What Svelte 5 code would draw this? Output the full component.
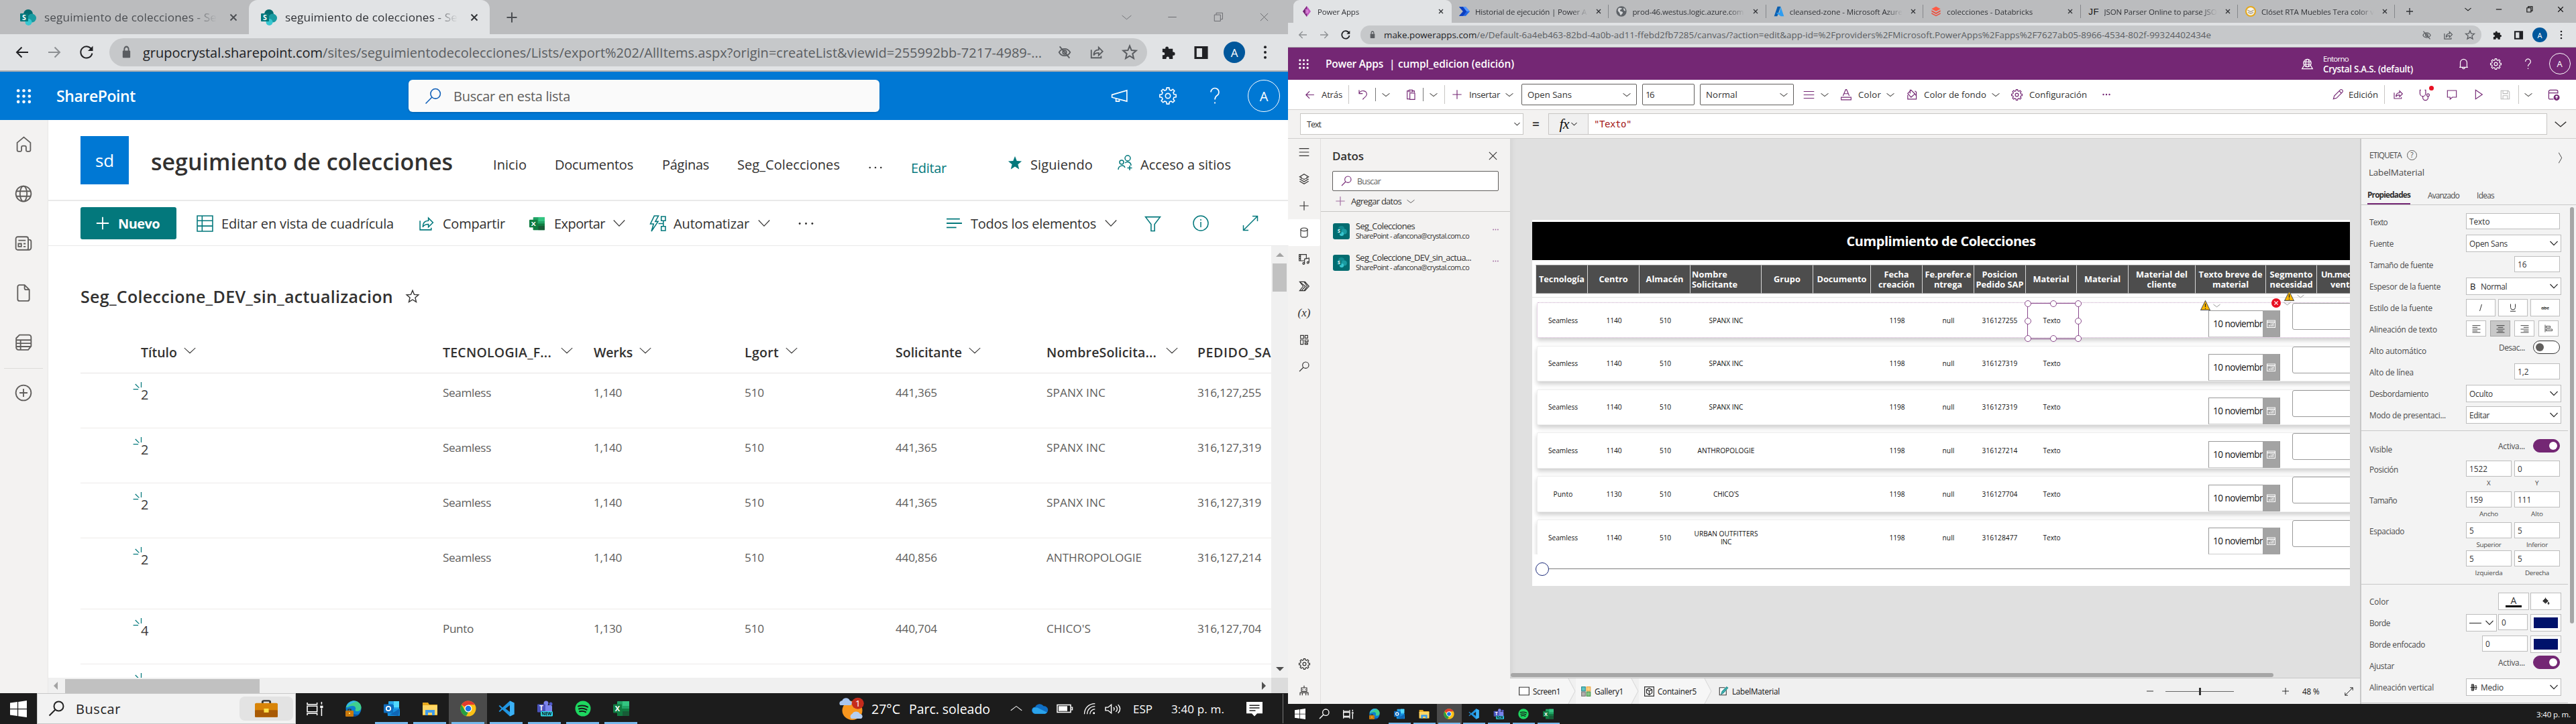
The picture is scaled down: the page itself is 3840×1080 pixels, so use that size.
<script>
  // Adjusts letter spacing so a label occupies its designed width.
  function fit(node, width) {
    if (!width) return;
    node.style.letterSpacing = '0px';
    const natural = node.getBoundingClientRect().width;
    const n = node.textContent.length || 1;
    node.style.letterSpacing = ((width - natural) / n).toFixed(3) + 'px';
  }

  function cog(teeth, outer, inner) {
    const pts = [];
    for (let i = 0; i < teeth; i++) {
      const a = (i / teeth) * Math.PI * 2;
      const s = Math.PI / teeth;
      for (const [r, d] of [[inner, -0.62], [outer, -0.36], [outer, 0.36], [inner, 0.62]]) {
        pts.push((12 + r * Math.cos(a + d * s)).toFixed(2) + ' ' + (12 + r * Math.sin(a + d * s)).toFixed(2));
      }
    }
    return `<path d="M${pts.join('L')}Z"/><circle cx="12" cy="12" r="3.4"/>`;
  }

  const F = 'fill="currentColor" stroke="none"';
  const dots9 = [4, 12, 20].map((y) => [4, 12, 20].map((x) => `<circle cx="${x}" cy="${y}" r="2.2" ${F}/>`).join('')).join('');
  const gfont = 'font-family="Open Sans, sans-serif" font-weight="700" stroke="none"';

  const icons = {
    back: '<path d="M21 12H4M11.500 4.500L4 12l7.500 7.500"/>',
    fwd: '<path d="M3 12h17M12.500 4.500L20 12l-7.500 7.500"/>',
    reload: '<path d="M19.500 7.800A8.600 8.600 0 1 0 20.400 13.500"/><path d="M21.500 2.500v7.500h-7.500z" fill="currentColor" stroke="none"/>',
    lock: `<rect x="4" y="9" width="16" height="13" rx="1.500" ${F}/><path d="M7.500 10V6.500a4.500 4.500 0 0 1 9 0V10"/>`,
    eyeoff: '<path d="M3 12c4-7.500 14-7.500 18 0c-4 7.500-14 7.500-18 0z"/><circle cx="12" cy="12" r="3"/><path d="M4 2.500L20 21.500"/>',
    share: '<path d="M3 8v13h16v-3"/><path d="M7 17c0-6 3-9 8-9V4l6.500 6.500L15 17v-4c-4 0-6.500 1-8 4z"/>',
    star: '<path d="M12 2.500l2.700 6.600 7 .5-5.400 4.600 1.700 7L12 17.400 6 21.200l1.700-7L2.300 9.600l7-.5z"/>',
    starfill: `<path d="M12 1l3 7.800 8 .4-6.200 5.200 2 8L12 18l-6.800 4.400 2-8L1 9.200l8-.4z" ${F}/>`,
    puzzle: `<path d="M10 2.500a2.500 2.500 0 0 1 2.500 2.500v1H19v5h.8a2.700 2.700 0 0 1 0 5.400H19V22h-5.500v-1.500a2.300 2.300 0 0 0-4.600 0V22H3v-6h1.300a2.300 2.300 0 0 0 0-4.600H3V6h4.500V5A2.500 2.500 0 0 1 10 2.500z" ${F}/>`,
    panel: `<path d="M1.500 2h21v20h-21zM5 5.200v13.600h8.500V5.200z" fill-rule="evenodd" ${F}/>`,
    vdots: `<circle cx="12" cy="3.500" r="2.200" ${F}/><circle cx="12" cy="12" r="2.200" ${F}/><circle cx="12" cy="20.500" r="2.200" ${F}/>`,
    hdots: `<circle cx="3" cy="12" r="1.400" ${F}/><circle cx="12" cy="12" r="1.400" ${F}/><circle cx="21" cy="12" r="1.400" ${F}/>`,
    hdotsb: `<circle cx="3" cy="12" r="2.400" ${F}/><circle cx="12" cy="12" r="2.400" ${F}/><circle cx="21" cy="12" r="2.400" ${F}/>`,
    close: '<path d="M3 3l18 18M21 3L3 21"/>',
    plus: '<path d="M12 2v20M2 12h20"/>',
    chev: '<path d="M1 6l11 11.500L23 6"/>',
    chevR: '<path d="M6 1l12 11L6 23"/>',
    chevUp: '<path d="M1 17L12 6l11 11"/>',
    min: '<path d="M2 12h20"/>',
    restore: '<path d="M2 6.500h14.500v15H2zM6.500 6V2h15v15H17"/>',
    waffle: dots9,
    search: '<circle cx="15.500" cy="8.500" r="7"/><path d="M10.500 13.500L1.500 22.500"/>',
    mega: '<path d="M1.500 10.500L22 4.500v15L1.500 14zM7 16v3.500h4.500v-2"/>',
    gear: cog(8, 11.3, 8.6),
    help: '<path d="M6.500 7a5.500 5.500 0 1 1 8.500 4.500c-2 1.400-3 2.500-3 5.500M12 20.500v2"/>',
    home: '<path d="M2.500 9.500L12 1.500l9.500 8V20a2 2 0 0 1-2 2h-2.700a1.500 1.500 0 0 1-1.500-1.500V16a2 2 0 0 0-2-2h-2.600a2 2 0 0 0-2 2v4.500A1.500 1.500 0 0 1 7.200 22H4.500a2 2 0 0 1-2-2z"/>',
    globe: '<circle cx="12" cy="12" r="10.500"/><ellipse cx="12" cy="12" rx="4.800" ry="10.500"/><path d="M2.500 8.500h19M2.500 15.500h19"/>',
    news: '<path d="M4 3h12a2.500 2.500 0 0 1 2.500 2.500V19a2 2 0 0 1-2 2H4a2.500 2.500 0 0 1-2.500-2.500v-13A2.500 2.500 0 0 1 4 3zM18.500 7h1.500a2.500 2.500 0 0 1 2.500 2.500V18a3 3 0 0 1-3 3h-3M5 8h10M12 12.500h3M12 16.500h3M5 12.500h4v4H5z"/>',
    file: '<path d="M5.500 1h8L20 7.500V20.500a2.500 2.500 0 0 1-2.500 2.500h-11A2.500 2.500 0 0 1 4 20.500v-17A2.500 2.500 0 0 1 6.500 1zM13.500 1v4.500a2 2 0 0 0 2 2H20"/>',
    list: '<path d="M6.500 1.500h13a3 3 0 0 1 3 3V17l-4 5H5a3 3 0 0 1-3-3V6zM2 8.500h20.500M2 13h20.500M2 17.500h20M8 8.500V22"/>',
    circplus: '<circle cx="12" cy="12" r="10.500"/><path d="M12 6.500v11M6.500 12h11"/>',
    grid: '<path d="M1 1h22v22H1zM8 1v22M1 8h22M1 15.500h22M15.500 8v0"/>',
    excel: `<rect x="6" y="1" width="18" height="22" rx="1" fill="#21a366" stroke="none"/><rect x="14" y="1" width="10" height="7" fill="#33c481" stroke="none"/><rect x="6" y="12" width="18" height="11" fill="#107c41" stroke="none"/><rect x="14" y="16" width="10" height="7" fill="#185c37" stroke="none"/><rect x="0" y="5.500" width="13" height="13" rx="1" fill="#107c41" stroke="none"/><text x="6.500" y="16" text-anchor="middle" font-size="11" fill="#fff" ${gfont}>X</text>`,
    flow: '<path d="M7 1L1.500 12.500H6L3 23 12.500 9H8.500L13 1zM17 2h6v6h-6zM17 16h6v6h-6zM20 8v8M13 12h7"/>',
    viewlist2: '<path d="M1 5h19M1 12h22M1 19h14"/>',
    filter: '<path d="M1.500 2.500h21L14.500 13v9.500h-5V13z"/>',
    info: '<circle cx="12" cy="12" r="11"/><path d="M12 10v8M12 6v2"/>',
    expand: '<path d="M1.500 22.500l21-21M15 1.500h7.500V9M1.500 15v7.500H9"/>',
    people: '<circle cx="15" cy="5" r="4"/><circle cx="6" cy="11" r="3"/><path d="M1 22c0-6 8-8 10-3M11 12c4-3 9-1 9 4M18 16v7M14.500 19.500h7"/>',
    sp: `<circle cx="12" cy="7" r="7" fill="#036c70" stroke="none"/><circle cx="17.500" cy="13" r="6.500" fill="#1a9ba1" stroke="none"/><circle cx="12.500" cy="19" r="5" fill="#37c6d0" stroke="none"/><rect x="0" y="6" width="12" height="12" rx="1" fill="#03787c" stroke="none"/><text x="6" y="16" text-anchor="middle" font-size="10.500" fill="#fff" ${gfont}>S</text>`,
    sptile: `<rect width="24" height="24" rx="3" fill="#036c70" stroke="none"/><circle cx="12" cy="8.500" r="4.500" fill="#1a9ba1" stroke="none" opacity=".6"/><circle cx="16" cy="12.500" r="4" fill="#1a9ba1" stroke="none"/><circle cx="12.500" cy="16" r="3" fill="#37c6d0" stroke="none"/><rect x="5" y="8.500" width="7" height="7" fill="#03787c" stroke="none"/><text x="8.500" y="14.500" text-anchor="middle" font-size="6.500" fill="#fff" ${gfont}>S</text>`,
    spark: '<path d="M1 20h12M6 8l9 9M20 3v13"/>',
    win: `<path d="M0 3.400L10.500 2v9.500H0zM11.700 1.800L24 0v11.500H11.700zM0 12.700h10.500V22L0 20.600zM11.700 12.700H24V24l-12.300-1.800z" ${F}/>`,
    taskview: '<path d="M1 2v3h14V2M1 22v-3h14v3M1 7.500h14v9H1zM21.500 1v4M21.500 11v12"/><rect x="19.500" y="7" width="4" height="3.500" fill="currentColor" stroke="none"/>',
    edge: '<circle cx="12" cy="12" r="11.500" fill="#0c7fcf" stroke="none"/><path d="M1 10C3 3 8 .5 13 .5c6 0 10.500 4.500 10.500 9.500 0 4-3 6-6.500 6-2.500 0-3-1.500-2-3 1-2-1-5-4-5-5 0-8 3-10 2z" fill="#3fcf8e" stroke="none"/><path d="M1 10C3 3 8 .5 13 .5c3 0 5 1 5 1C12 2 6 6 1 10z" fill="#35b8e8" stroke="none"/><path d="M8 12c-1 5 3 9 9 9 2 0 4-1 5-2-2 3-6 5-10 5-5-1-7-7-4-12z" fill="#0a4fa0" stroke="none"/><rect x="0" y="15" width="12" height="9" rx="1" fill="#c9780c" stroke="none"/><path d="M4 15v-2h4v2" stroke="#4a2a00" stroke-width="1.200"/><rect x="5" y="18" width="2" height="2" fill="#ffe36b" stroke="none"/>',
    outlook: `<rect x="7" y="1" width="16" height="19" rx="1" fill="#28a8ea" stroke="none"/><rect x="15" y="1" width="8" height="9" fill="#50d9ff" stroke="none"/><rect x="7" y="7" width="8" height="7" fill="#0364b8" stroke="none"/><path d="M5 12l19 0v10a1 1 0 0 1-1 1H6z" fill="#1490df" stroke="none"/><path d="M24 12L9 21l13 2z" fill="#1066b5" stroke="none"/><rect x="0" y="5.500" width="14" height="13" rx="1" fill="#0f6cbd" stroke="none"/><circle cx="7" cy="12" r="3.200" stroke="#fff" stroke-width="1.800"/>`,
    folder: '<path d="M1 3h8l2 3h12v16H1z" fill="#e8a81c" stroke="none"/><rect x="1" y="7" width="22" height="14" rx="1" fill="#ffd766" stroke="none"/><path d="M5 22v-8h14v8h-4v-4H9v4z" fill="#3f9be8" stroke="none"/>',
    chrome: '<circle cx="12" cy="12" r="11.500" fill="#fbc116" stroke="none"/><path d="M12 12L2 6.200A11.500 11.500 0 0 1 22 6.300H12z" fill="#e33b2e" stroke="none"/><path d="M2 6.200l5 8.700L12 17.500 9 23.100A11.500 11.500 0 0 1 2 6.200z" fill="#269f42" stroke="none"/><circle cx="12" cy="12" r="5.500" fill="#fff" stroke="none"/><circle cx="12" cy="12" r="4.300" fill="#1a73e8" stroke="none"/>',
    vscode: '<path d="M17 .5l6.500 3v17l-6.500 3L6 13.500 2 17 .5 16 4.500 12 .5 8 2 7l4 3.500z" fill="#2196e3" stroke="none"/><path d="M17 7v10l-6.500-5z" fill="#1c1c1c" stroke="none"/><path d="M17 .5l6.500 3v17l-6.500 3z" fill="#3bb1f5" stroke="none"/>',
    teams: `<circle cx="14" cy="4" r="3.500" fill="#7b83eb" stroke="none"/><circle cx="21" cy="5" r="2.500" fill="#5059c9" stroke="none"/><rect x="8" y="7" width="15" height="12" rx="2" fill="#7b83eb" stroke="none"/><rect x="1" y="5.500" width="12" height="12" rx="1" fill="#4b53bc" stroke="none"/><text x="7" y="15" text-anchor="middle" font-size="10" fill="#fff" ${gfont}>T</text><rect x="6" y="16" width="18" height="7.500" rx="1.500" fill="#2fe0ee" stroke="none"/><text x="15" y="22.200" text-anchor="middle" font-size="6.500" fill="#111" ${gfont}>NEW</text>`,
    spotify: '<circle cx="12" cy="12" r="11.500" fill="#1ed760" stroke="none"/><path d="M5 8.500c5-1.500 10-1 14 1.200M6 12.500c4-1.200 8-.7 11.500 1.200M7 16.200c3.500-1 6.500-.5 9 1" stroke="#161616" stroke-width="2" stroke-linecap="round"/>',
    case: '<path d="M8 6V3.500A1.500 1.500 0 0 1 9.500 2h5A1.500 1.500 0 0 1 16 3.500V6" stroke="#333" stroke-width="2"/><rect x="0" y="5" width="24" height="18" rx="1.500" fill="#d88408" stroke="none"/><rect x="0" y="14" width="24" height="9" rx="1" fill="#a85a05" stroke="none"/><rect x="9.500" y="12" width="5" height="5" fill="#ffe14a" stroke="none"/>',
    weather: `<circle cx="13" cy="14" r="10" fill="#f8961e" stroke="none"/><path d="M1 8.500a3 3 0 0 1 2-5 4 4 0 0 1 7.500 0 2.800 2.800 0 0 1 1 5z" fill="#a9c5ee" stroke="none"/><path d="M12 22.500a3 3 0 0 1 1-5 4.200 4.200 0 0 1 7.500 0 2.800 2.800 0 0 1 1.500 5z" fill="#b5cef2" stroke="none"/><circle cx="18.500" cy="6.500" r="6" fill="#c42b1c" stroke="none"/><text x="18.500" y="10" text-anchor="middle" font-size="9.500" fill="#fff" font-family="Open Sans" stroke="none">1</text>`,
    cloud: '<path d="M5 19a5 5 0 0 1 0-10 7 7 0 0 1 12-1 5.600 5.600 0 0 1 2 11z" fill="#0f6fc5" stroke="none"/><path d="M5 19a5 5 0 0 1-2-9l5 0 14 7a5 5 0 0 1-3 2z" fill="#2ba3ea" stroke="none"/>',
    battery: `<path d="M1 6h20v12H1zM22 10h1.500v4H22"/><rect x="3" y="8" width="13" height="8" ${F}/>`,
    wifi: '<path d="M3 22C3 11 11 3 22 3M8 22C8 14 14 8 22 8M13 22c0-5 4-9 9-9"/><circle cx="20" cy="20" r="1.800" fill="currentColor" stroke="none"/>',
    speaker: '<path d="M1 9h4l5-5v16l-5-5H1zM13.500 9c1.500 2 1.500 4 0 6M17 6.500c3 3.500 3 7.500 0 11M20.500 4c4 5 4 11 0 16"/>',
    notif: '<path d="M0 1h24v18h-8l-4 4.500L8 19H0z" fill="#fff" stroke="none"/><path d="M4.500 6.500h15M4.500 10.500h15M4.500 14.500h9" stroke="#1c1c1c" stroke-width="1.600"/>',
    papps: '<path d="M12 0l9 12-9 12L3 12z" fill="#c05abf" stroke="none"/><path d="M12 0L3 12l9 12z" fill="#742774" stroke="none"/><path d="M9 6c4 2 7 2 7 6s-3 4-7 6z" fill="#e08ae0" stroke="none" opacity=".8"/>',
    pauto: '<path d="M0 2h15l9 10-9 10H0l9-10z" fill="#2266e3" stroke="none"/><path d="M0 2h9l8 10-8 10H0l9-10z" fill="#0d3fbf" stroke="none"/><path d="M9 2h6l9 10h-7z" fill="#5b9bff" stroke="none"/>',
    gglobe: '<circle cx="12" cy="12" r="11.500" fill="#5f6368" stroke="none"/><path d="M6 5c4-2 5 1 8 0-1 3-5 2-5 5s5 1 6 4-3 4-4 7c-3-2-2-6-5-8s-2-6 0-8z" fill="#d5d7d9" stroke="none"/><path d="M17 4c2 1 4 4 4 7-3 0-5-2-4-7z" fill="#d5d7d9" stroke="none"/>',
    azure: '<path d="M8.500 1h7L8 23H1z" fill="#0b5fb0" stroke="none"/><path d="M15.500 1L23 23h-7L5 15h8z" fill="#2f9df0" stroke="none"/>',
    bricks: '<path d="M2 6.500L12 1l10 5.500L12 12z" fill="#ff5a45" stroke="none"/><path d="M2 9.500l10 5.500 10-5.500v3L12 18 2 12.500zM2 15l10 5.500L22 15v2.500L12 23 2 17.500z" fill="#ee4a38" stroke="none"/>',
    jf: '<text x="12" y="19.500" text-anchor="middle" font-size="20" fill="#111" stroke="none" font-family="Liberation Sans" textLength="23">JF</text>',
    closet: '<circle cx="12" cy="12" r="10.500" fill="#f5f2e8" stroke="#e5a81b" stroke-width="3"/><path d="M5 9l7 4 7-4M6 14l6 3 6-3" stroke="#a8a090" stroke-width="2"/>',
    envglobe: '<circle cx="12" cy="10" r="8"/><ellipse cx="12" cy="10" rx="3.500" ry="8"/><path d="M4 7.500h16M4 12.500h16M5 15L1 22h22l-4-7"/>',
    bell: '<path d="M5 19V9a7 7 0 0 1 14 0v10zM3 19h18M9.500 19a2.500 3 0 0 0 5 0"/>',
    undo: '<path d="M3 2v8h8M3 10c3-9 18-8 17 2-.5 5-5 6-9 11"/>',
    clip: '<path d="M8 4H4v18h5M16 4h4v4M8 2h8v4H8zM10 9h11v14H10z"/>',
    fontA: '<path d="M5 14L11 1h2l6 13M7.500 9.500h9M1 17h22v5.500H1z"/>',
    bucket: '<path d="M4 9l7-7 8 8-8 7zM9 1v8M4 12v9h18V6l-3-2M19 10l3 4"/>',
    pencil: '<path d="M2 22l2-7L17 2a3 3 0 0 1 5 5L9 20zM15 4l5 5"/>',
    steth: '<path d="M4 2H2v7a6 6 0 0 0 12 0V2h-2M8 15v3a5 5 0 0 0 11 0v-3"/><circle cx="19" cy="12.500" r="2.700"/>',
    comment: '<path d="M2 3h20v15h-9l-5 4.500V18H2z"/>',
    play: '<path d="M5 2l15 10L5 22z"/>',
    save: '<path d="M2 2h17l3 3v17H2zM6.500 2v7h11V2M6.500 22v-8h11v8"/>',
    publish: '<path d="M12 21H4a2 2 0 0 1-2-2V5a3 3 0 0 1 3-3h13a3 3 0 0 1 3 3v4M2 8h19"/><circle cx="18.500" cy="17.500" r="5.500" fill="currentColor"/><path d="M18.500 20.500v-6M16 17l2.500-2.500L21 17" stroke="#fff"/>',
    menu: '<path d="M1 4h22M1 12h22M1 20h22"/>',
    layers: '<path d="M12 1l10 6-10 6L2 7zM2 12l10 6 10-6M2 17l10 6 10-6M6 7v5M18 7v5"/>',
    db: '<ellipse cx="12" cy="5" rx="7.500" ry="3.500"/><path d="M4.500 5v14c0 4.500 15 4.500 15 0V5"/>',
    media: '<path d="M12 15H1V1h16v9M4 1v14M1 5h3M1 10h3M13 22V11l10-2v10"/><circle cx="11" cy="21" r="2"/><circle cx="20.500" cy="19" r="2"/>',
    pa2: '<path d="M2 2h12l9 10-9 10H2l8-10zM2 2l13 10L6 22M12 2l7 10-7 10"/>',
    tools: '<path d="M4 2h7v7H4zM14 2h6v6h-6zM4 12h6v10H4zM14 12h7v4h-7zM14 19h6v3h-6z"/>',
    robot: '<path d="M12 1v5M6 6h12v8H6zM3 23v-6h18v6M8 17v6M16 17v6"/><path d="M9 9v2M15 9v2"/>',
    sq: '<rect x="1" y="2" width="22" height="20" fill="#fff"/>',
    gallery: '<rect x="1" y="1" width="9" height="10" fill="#5fc4c4" stroke="#23888a"/><rect x="13" y="1" width="9" height="10" fill="#fccf7c" stroke="#e9a33d"/><rect x="1" y="13" width="9" height="10" fill="#b3b0ad" stroke="#797775"/><rect x="13" y="13" width="9" height="10" fill="#87c487" stroke="#3f9142"/>',
    container: '<rect x="1" y="1" width="22" height="22" stroke-width="2" fill="#fff"/><path d="M12 4l6.500 3.500v8L12 20l-6.500-4.500v-8zM5.500 7.500L12 11l6.500-3.500M12 11v9" stroke-width="2"/>',
    label: '<path d="M18 9v13H2V3h13" fill="#fff"/><path d="M6 20l2-7L19 1l3 2.500L11 17z" fill="#3fb5b5" stroke="#2a8c8c"/>',
    warn: '<path d="M12 1l11 22H1z" fill="#ffb900" stroke="#555"/><path d="M12 8v8M12 18.500v2" stroke="#222" stroke-width="2"/>',
    err: '<circle cx="12" cy="12" r="12" fill="#e81123" stroke="none"/><path d="M7.500 7.500l9 9M16.500 7.500l-9 9" stroke="#fff" stroke-width="2.200"/>',
    cal: '<rect x="1" y="2" width="22" height="21" stroke-width="2"/><path d="M1 7h22" stroke-width="3"/><path d="M7 20v-4M12 20v-6M17 20v-8M11 11h2M16 11h3M6 16h2" stroke-width="2.500"/>',
    left: '<path d="M1 3h22M1 8h14M1 13h22M1 18h14M1 22h22"/>',
    center: '<path d="M1 3h22M5 8h14M1 13h22M5 18h14M1 22h22"/>',
    right: '<path d="M1 3h22M9 8h14M1 13h22M9 18h14M1 22h22"/>',
    just: '<path d="M2 1v22M5 5h12v5H5zM5 14h18v5H5z"/>',
    italic: '<path d="M15 2L9 22"/>',
    under: '<path d="M5 1v10a7 7 0 0 0 14 0V1M4 22.500h16"/>',
    fill: '<path d="M3 11l8-8 8 8-8 7z" fill="currentColor"/><path d="M11 1v6"/><path d="M20 14c2 4 3 6 0 7-3-1-2-4 0-7z" fill="currentColor"/>',
    middle: '<path d="M1 12h22M5 2h7v20H5zM16 6h5v12h-5zM7 2v20M10 2v20"/>'
  };

  const listCols = [
    { t: 'Título', w: 54 }, { t: 'TECNOLOGIA_F...', w: 162, far: true }, { t: 'Werks', w: 58 }, { t: 'Lgort', w: 51 },
    { t: 'Solicitante', w: 99 }, { t: 'NombreSolicita...', w: 164, far: true }, { t: 'PEDIDO_SA', w: 110, last: true }
  ];
  const listRows = [
    ['2', 'Seamless', 72, '1,140', '441,365', 'SPANX INC', 88, '316,127,255'],
    ['2', 'Seamless', 72, '1,140', '441,365', 'SPANX INC', 88, '316,127,319'],
    ['2', 'Seamless', 72, '1,140', '441,365', 'SPANX INC', 88, '316,127,319'],
    ['2', 'Seamless', 72, '1,140', '440,856', 'ANTHROPOLOGIE', 142, '316,127,214'],
    ['4', 'Punto', 46, '1,130', '440,704', "CHICO'S", 66, '316,127,704']
  ];
  const apps = ['edge', 'outlook', 'folder', 'chrome', 'vscode', 'teams', 'spotify', 'excel'];

  const rTabs = [
    { i: 'pauto', t: 'Historial de ejecución | Power A', w: 166 },
    { i: 'gglobe', t: 'prod-46.westus.logic.azure.com', w: 166 },
    { i: 'azure', t: 'cleansed-zone - Microsoft Azure', w: 168 },
    { i: 'bricks', t: 'colecciones - Databricks', w: 128 },
    { i: 'jf', t: 'JSON Parser Online to parse JSO', w: 168 },
    { i: 'closet', t: 'Clóset RTA Muebles Tera color v', w: 168 }
  ];
  const rail = ['menu', 'layers', 'plus', 'db', 'media', 'pa2', 'var', 'tools', 'search'];
  const sources = [{ t: 'Seg_Colecciones', w: 88 }, { t: 'Seg_Coleccione_DEV_sin_actua...', w: 172 }];

  // header cells: column width, then lines with their widths
  const heads = [
    [77, [['Tecnología', 68]]], [77, [['Centro', 43]]], [76, [['Almacén', 56]]],
    [106, [['Nombre', 53], ['Solicitante', 68]], 'start'], [77, [['Grupo', 40]]], [86, [['Documento', 74]]],
    [77, [['Fecha', 37], ['creación', 54]]], [77, [['Fe.prefer.e', 69], ['ntrega', 42]]],
    [77, [['Posicion', 53], ['Pedido SAP', 71]]], [76, [['Material', 54]]], [77, [['Material', 54]]],
    [100, [['Material del', 77], ['cliente', 44]]], [105, [['Texto breve de', 95], ['material', 54]]],
    [76, [['Segmento', 64], ['necesidad', 64]]], [77, [['Un.medida', 64], ['venta', 36]]]
  ];
  const gal = [
    ['Seamless', 44, '1140', [['SPANX INC', 51]], '316127255'],
    ['Seamless', 44, '1140', [['SPANX INC', 51]], '316127319'],
    ['Seamless', 44, '1140', [['SPANX INC', 51]], '316127319'],
    ['Seamless', 44, '1140', [['ANTHROPOLOGIE', 85]], '316127214'],
    ['Punto', 29, '1130', [["CHICO'S", 38]], '316127704'],
    ['Seamless', 44, '1140', [['URBAN OUTFITTERS', 95], ['INC', 16]], '316128477']
  ];
</script>

{#snippet ic(name, w, h, cls)}
  <svg class="i {cls ?? ''}" width={w} height={h ?? w} viewBox="0 0 24 24" preserveAspectRatio="none">{@html icons[name]}</svg>
{/snippet}
{#snippet t(text, w, cls)}<span class="t {cls ?? ''}" use:fit={w}>{text}</span>{/snippet}
{#snippet sel(text, w, cls)}
  <div class="pbox psel {cls ?? ''}">{@render t(text, w)}{@render ic('chev', 12, 12)}</div>
{/snippet}
{#snippet toggle(on)}
  <div class="tg" class:on><i></i></div>
{/snippet}
{#snippet pair(a, al, aw, b, bl, bw)}
  <div class="pairs">
    <div class="pc"><div class="pbox sm">{a}</div>{@render t(al, aw, 'cap')}</div>
    <div class="pc"><div class="pbox sm">{b}</div>{@render t(bl, bw, 'cap')}</div>
  </div>
{/snippet}

<div class="desk">
  <section class="left">
    <div class="ltabs">
      <div class="ltab">{@render ic('sp', 24)}<span class="fade">{@render t('seguimiento de colecciones - Se', 257)}</span>{@render ic('close', 12, 12, 's4')}</div>
      <div class="ltab act">{@render ic('sp', 24)}<span class="fade">{@render t('seguimiento de colecciones - Se', 257)}</span>{@render ic('close', 12, 12, 's4')}</div>
      <div class="lplus">{@render ic('plus', 18, 18, 's3')}</div>
      <div class="lwin">{@render ic('chev', 15, 12)}{@render ic('min', 15)}{@render ic('restore', 15)}{@render ic('close', 15)}</div>
    </div>
    <div class="lbar">
      {@render ic('back', 24, 24, 's2')}{@render ic('fwd', 24, 24, 's2 dim')}{@render ic('reload', 24, 24, 's2')}
      <div class="laddr">
        {@render ic('lock', 17, 20, 's3')}
        <span class="url"><span class="t" use:fit={1340}><b>grupocrystal.sharepoint.com</b>/sites/seguimientodecolecciones/Lists/export%202/AllItems.aspx?origin=createList&viewid=255992bb-7217-4989-...</span></span>
        {@render ic('eyeoff', 22, 22, 's2')}{@render ic('share', 22, 22, 's2')}{@render ic('star', 24, 24, 's2')}
      </div>
      {@render ic('puzzle', 23)}{@render ic('panel', 23)}<span class="av">A</span>{@render ic('vdots', 22)}
    </div>
    <header class="sp">
      {@render ic('waffle', 25)}{@render t('SharePoint', 118, 'brand')}
      <div class="lsearch">{@render ic('search', 25)}{@render t('Buscar en esta lista', 174)}</div>
      {@render ic('mega', 26)}{@render ic('gear', 26)}{@render ic('help', 26)}<span class="me">A</span>
    </header>
    <div class="lbody">
      <nav class="lrail">
        {@render ic('home', 25)}{@render ic('globe', 26)}{@render ic('news', 26)}{@render ic('file', 26)}{@render ic('list', 26)}
        <hr />
        {@render ic('circplus', 26)}
      </nav>
      <main>
        <div class="site">
          <div class="logo">{@render t('sd', 28)}</div>
          {@render t('seguimiento de colecciones', 450, 'h')}
          {@render t('Inicio', 50)}{@render t('Documentos', 117)}{@render t('Páginas', 70)}{@render t('Seg_Colecciones', 153)}
          {@render ic('hdots', 22, 22, 'low')}{@render t('Editar', 53, 'teal')}
          {@render ic('starfill', 22, 22, 'tealc')}{@render t('Siguiendo', 93)}{@render ic('people', 24, 24, 'tealc')}{@render t('Acceso a sitios', 135)}
        </div>
        <div class="cmd">
          <div class="new">{@render ic('plus', 22, 22, 's2')}{@render t('Nuevo', 62)}</div>
          {@render ic('grid', 25, 25, 'tealc')}{@render t('Editar en vista de cuadrícula', 257)}
          {@render ic('share', 25, 25, 'tealc')}{@render t('Compartir', 93)}
          {@render ic('excel', 23, 21)}{@render t('Exportar', 76)}{@render ic('chev', 18, 18)}
          {@render ic('flow', 25, 25, 'tealc')}{@render t('Automatizar', 113)}{@render ic('chev', 18, 18)}
          {@render ic('hdots', 25)}
          {@render ic('viewlist2', 25, 22, 'tealc s2')}{@render t('Todos los elementos', 187)}{@render ic('chev', 18, 18)}
          {@render ic('filter', 25, 25, 'tealc')}{@render ic('info', 24, 24, 'tealc')}{@render ic('expand', 24, 24, 'tealc')}
        </div>
        <div class="scroll">
          <div class="list">
            <div class="ltitle">{@render t('Seg_Coleccione_DEV_sin_actualizacion', 466)}{@render ic('star', 22)}</div>
            <div class="lr lhead">
              {#each listCols as c}
                <div class="lh" class:far={c.far}>{@render t(c.t, c.w)}{#if !c.last}{@render ic('chev', 18, 16)}{/if}</div>
              {/each}
            </div>
            {#each listRows as r, i}
              <div class="lr row" class:tall={i === 3}>
                <div class="num">{@render ic('spark', 15, 15, 'tealc s2')}<span>{r[0]}</span></div>
                <div>{@render t(r[1], r[2])}</div>
                <div>{@render t(r[3], 42)}</div>
                <div>{@render t('510', 29)}</div>
                <div>{@render t(r[4], 62)}</div>
                <div>{@render t(r[5], r[6])}</div>
                <div>{@render t(r[7], 95)}</div>
              </div>
            {/each}
            <div class="lr row"><div class="num">{@render ic('spark', 15, 15, 'tealc s2')}</div></div>
          </div>
          <div class="vsb"><i class="au"></i><i class="th"></i><i class="ad"></i></div>
          <div class="hsb"><i class="al"></i><i class="th"></i><i class="ar"></i></div>
          <div class="corner"></div>
        </div>
      </main>
    </div>
    <footer class="tb big">
      <div class="st">{@render ic('win', 25)}</div>
      <div class="tsearch">{@render ic('search', 24, 24, 's2')}{@render t('Buscar', 67)}<span class="case">{@render ic('case', 34, 28)}</span></div>
      <div class="app">{@render ic('taskview', 25, 23)}</div>
      {#each apps as a, i}
        <div class="app" class:cur={a === 'chrome'} class:run={i > 0}>{@render ic(a, 24)}</div>
      {/each}
      <div class="tray">
        {@render ic('weather', 36, 34)}{@render t('27°C', 43)}{@render t('Parc. soleado', 121)}
        {@render ic('chevUp', 18, 14)}{@render ic('cloud', 25)}{@render ic('battery', 24, 22)}{@render ic('wifi', 20, 20)}{@render ic('speaker', 23, 19)}
        {@render t('ESP', 29, 'ts')}{@render t('3:40 p. m.', 79, 'ts')}{@render ic('notif', 24, 23)}<i class="edge"></i>
      </div>
    </footer>
  </section>

  <section class="right">
    <div class="rtabs">
      <div class="rtab act">{@render ic('papps', 16)}<span class="fade">{@render t('Power Apps', 62)}</span>{@render ic('close', 8, 8, 's4')}</div>
      {#each rTabs as b}
        <div class="rtab">{@render ic(b.i, 16)}<span class="fade">{@render t(b.t, b.w)}</span>{@render ic('close', 8, 8, 's4')}</div>
      {/each}
      <div class="rplus">{@render ic('plus', 12, 12, 's3')}</div>
      <div class="rwin">{@render ic('chev', 10, 8, 's3')}{@render ic('min', 10, 10, 's3')}{@render ic('restore', 10, 10, 's3')}{@render ic('close', 10, 10, 's3')}</div>
    </div>
    <div class="rbar">
      {@render ic('back', 16, 16, 's2 dim')}{@render ic('fwd', 16, 16, 's2 dim')}{@render ic('reload', 16, 16, 's3')}
      <div class="raddr">
        {@render ic('lock', 10, 12, 's3')}
        <span class="url"><span class="t" use:fit={1233}><b>make.powerapps.com</b>/e/Default-6a4eb463-82bd-4a0b-ad11-ffebd2fb7285/canvas/?action=edit&app-id=%2Fproviders%2FMicrosoft.PowerApps%2Fapps%2F7627ab05-8966-4534-802f-99324402434e</span></span>
        {@render ic('eyeoff', 15, 15, 's2')}{@render ic('share', 15, 15, 's2')}{@render ic('star', 16, 16, 's2')}
      </div>
      {@render ic('puzzle', 15)}{@render ic('panel', 15)}<span class="av">A</span>{@render ic('vdots', 14)}
    </div>
    <header class="pa">
      {@render ic('waffle', 17)}{@render t('Power Apps', 86, 'b')}{@render t('|', 4, 'b')}{@render t('cumpl_edicion (edición)', 173, 'b')}
      {@render ic('envglobe', 17)}
      <div class="env">{@render t('Entorno', 38, 'e1')}{@render t('Crystal S.A.S. (default)', 134, 'e2')}</div>
      {@render ic('bell', 17)}{@render ic('gear', 17)}{@render ic('help', 17)}<span class="me">A</span>
    </header>
    <div class="ptool">
      {@render ic('back', 17)}{@render t('Atrás', 31)}<i class="vl"></i>{@render ic('undo', 16)}<i class="vl sh"></i>{@render ic('chev', 12, 9, 'g')}
      {@render ic('clip', 16)}<i class="vl sh"></i>{@render ic('chev', 12, 9, 'g')}<i class="vl"></i>
      {@render ic('plus', 16)}{@render t('Insertar', 46)}{@render ic('chev', 12, 9, 'g')}
      <div class="tbx a">{@render t('Open Sans', 66)}{@render ic('chev', 12, 9, 'g')}</div>
      <div class="tbx b">{@render t('16', 12)}</div>
      <div class="tbx c">{@render t('Normal', 47)}{@render ic('chev', 12, 9, 'g')}</div>
      {@render ic('menu', 17, 15)}{@render ic('chev', 12, 9, 'g')}
      {@render ic('fontA', 16, 17)}{@render t('Color', 34)}{@render ic('chev', 12, 9, 'g')}
      {@render ic('bucket', 17)}{@render t('Color de fondo', 93)}{@render ic('chev', 12, 9, 'g')}
      {@render ic('gear', 17)}{@render t('Configuración', 86)}{@render ic('hdotsb', 12)}
      {@render ic('pencil', 16)}{@render t('Edición', 44)}<i class="vl"></i>
      {@render ic('share', 16)}<span class="dotted">{@render ic('steth', 17)}</span>{@render ic('comment', 16)}{@render ic('play', 16)}{@render ic('save', 15, 15, 'off')}<i class="vl"></i>{@render ic('chev', 12, 9, 'g')}{@render ic('publish', 17)}
    </div>
    <div class="formula">
      <div class="prop">{@render t('Text', 21)}{@render ic('chev', 9, 8, 's3')}</div>
      <span class="eq">=</span>
      <div class="fx"><em>fx</em>{@render ic('chev', 9, 8, 's3')}</div>
      <div class="fin">{@render t('"Texto"', 56)}</div>
      {@render ic('chev', 18, 15, 's2')}
    </div>
    <div class="pbody">
      <nav class="rrail">
        {#each rail as r}
          <div class="ri" class:on={r === 'db'}>{#if r === 'var'}<em>(x)</em>{:else}{@render ic(r, 16)}{/if}</div>
        {/each}
        <div class="ri sp1">{@render ic('gear', 17)}</div>
        <div class="ri">{@render ic('robot', 16)}</div>
      </nav>
      <aside class="data">
        <div class="dh">{@render t('Datos', 47)}{@render ic('close', 15)}</div>
        <div class="ds">{@render ic('search', 16)}{@render t('Buscar', 35)}</div>
        <div class="da">{@render ic('plus', 16)}{@render t('Agregar datos', 75)}{@render ic('chev', 12, 9)}</div>
        {#each sources as s}
          <div class="src">{@render ic('sptile', 25, 24)}<div class="st2">{@render t(s.t, s.w, 's1')}{@render t('SharePoint - afancona@crystal.com.co', 169, 's22')}</div>{@render ic('hdotsb', 9)}</div>
        {/each}
      </aside>
      <div class="work">
        <div class="canvas">
          <div class="appx">
            <div class="banner">{@render t('Cumplimiento de Colecciones', 282)}</div>
            <div class="heads">
              {#each heads as h}
                <div class="hd" class:start={h[2]} style:width="{h[0]}px">{#each h[1] as l}{@render t(l[0], l[1])}{/each}</div>
              {/each}
            </div>
            <div class="gallery">
              {#each gal as g, i}
                <div class="card" class:first={i === 0}>
                  <div>{@render t(g[0], g[1])}</div><div>{@render t(g[2], 23)}</div><div>{@render t('510', 17)}</div>
                  <div>{#each g[3] as l}{@render t(l[0], l[1])}{/each}</div><div></div>
                  <div>{@render t('1198', 23)}</div><div>{@render t('null', 18)}</div><div>{@render t(g[4], 53)}</div><div class="tx">{@render t('Texto', 26)}</div><div></div>
                  <div class="date"><span class="dv">{@render t('10 noviembr', 74)}</span><i>{@render ic('cal', 13, 12)}</i></div><div></div>
                  <div class="inp"></div>
                </div>
              {/each}
            </div>
            <div class="slider"><i class="knob"></i><i class="track"></i></div>
            <div class="selbox">{#each [0, 1, 2, 3, 4, 5, 6, 7] as k}<i class="h{k}"></i>{/each}</div>
            <div class="w1">{@render ic('warn', 15)}{@render ic('chev', 11, 8)}</div>
            <div class="w2">{@render ic('err', 14)}</div>
            <div class="w4">{@render ic('chev', 11, 8)}</div>
            <div class="w3">{@render ic('warn', 15)}{@render ic('chev', 11, 8)}</div>
          </div>
          <div class="csb"></div>
        </div>
        <div class="crumbs">
          <div class="cr c1">{@render ic('sq', 16, 14)}{@render t('Screen1', 41)}</div>
          <svg class="sep" width="12" height="38" viewBox="0 0 12 38"><path d="M0 0l10 19L0 38z" fill="#f6f6f6" /><path d="M1 0l10 19L1 38" fill="none" stroke="#d8d8d8" /></svg>
          <div class="cr c2">{@render ic('gallery', 15)}{@render t('Gallery1', 43)}</div>
          <svg class="sep" width="12" height="38" viewBox="0 0 12 38"><path d="M0 0l10 19L0 38z" fill="#f6f6f6" /><path d="M1 0l10 19L1 38" fill="none" stroke="#d8d8d8" /></svg>
          <div class="cr c3">{@render ic('container', 15)}{@render t('Container5', 58)}</div>
          <svg class="sep" width="12" height="38" viewBox="0 0 12 38"><path d="M0 0l10 19L0 38z" fill="#f6f6f6" /><path d="M1 0l10 19L1 38" fill="none" stroke="#d8d8d8" /></svg>
          <div class="cr c4">{@render ic('label', 15, 14)}{@render t('LabelMaterial', 71)}</div>
          <div class="zoomer">{@render ic('min', 12)}<span class="zs"><i></i></span>{@render ic('plus', 12)}{@render t('48', 13)}{@render t('%', 9)}{@render ic('expand', 13)}</div>
        </div>
      </div>
      <aside class="props">
        <div class="ph">
          <div class="ph1">{@render t('ETIQUETA', 48)}<span class="q">?</span>{@render ic('chevR', 9, 17)}</div>
          <div class="ph2">{@render t('LabelMaterial', 83)}</div>
          <div class="ptabs"><span class="on">{@render t('Propiedades', 64)}</span><span>{@render t('Avanzado', 47)}</span><span>{@render t('Ideas', 26)}</span></div>
        </div>
        <div class="pscroll">
          <div class="group g1">
            <div class="pr">{@render t('Texto', 27)}<div class="pbox wd">Texto</div></div>
            <div class="pr">{@render t('Fuente', 36)}{@render sel('Open Sans', 57)}</div>
            <div class="pr">{@render t('Tamaño de fuente', 95)}<div class="pbox sm">16</div></div>
            <div class="pr">{@render t('Espesor de la fuente', 106)}<div class="pbox psel"><span class="bb">B</span>{@render t('Normal', 39)}{@render ic('chev', 12, 12)}</div></div>
            <div class="pr">{@render t('Estilo de la fuente', 94)}<div class="seg3"><b>{@render ic('italic', 12, 12, 's2')}</b><b>{@render ic('under', 12, 12, 's2')}</b><b><s>abc</s></b></div></div>
            <div class="pr">{@render t('Alineación de texto', 101)}<div class="seg4"><b>{@render ic('left', 13)}</b><b class="on">{@render ic('center', 13)}</b><b>{@render ic('right', 13)}</b><b>{@render ic('just', 12)}</b></div></div>
            <div class="pr">{@render t('Alto automático', 85)}<div class="tw">{@render t('Desac...', 39)}{@render toggle(false)}</div></div>
            <div class="pr">{@render t('Alto de línea', 66)}<div class="pbox sm">1,2</div></div>
            <div class="pr">{@render t('Desbordamiento', 88)}{@render sel('Oculto', 35)}</div>
            <div class="pr">{@render t('Modo de presentaci...', 114)}{@render sel('Editar', 30)}</div>
          </div>
          <div class="group g2">
            <div class="pr">{@render t('Visible', 34)}<div class="tw">{@render t('Activa...', 40)}{@render toggle(true)}</div></div>
            <div class="pr p46">{@render t('Posición', 43)}{@render pair('1522', 'X', 6, '0', 'Y', 6)}</div>
            <div class="pr p46">{@render t('Tamaño', 41)}{@render pair('159', 'Ancho', 28, '111', 'Alto', 18)}</div>
            <div class="pr p42">{@render t('Espaciado', 52)}{@render pair('5', 'Superior', 37, '5', 'Inferior', 32)}</div>
            <div class="pr p46"><span></span>{@render pair('5', 'Izquierda', 41, '5', 'Derecha', 36)}</div>
          </div>
          <div class="group g3">
            <div class="pr">{@render t('Color', 29)}<div class="sw"><b class="ca">A<i></i></b><b>{@render ic('fill', 12)}</b></div></div>
            <div class="pr">{@render t('Borde', 31)}<div class="sw"><b class="ln"><i></i>{@render ic('chev', 12, 12)}</b><div class="pbox n1">0</div><b><u></u></b></div></div>
            <div class="pr">{@render t('Borde enfocado', 83)}<div class="sw"><div class="pbox n2">0</div><b><u></u></b></div></div>
            <div class="pr">{@render t('Ajustar', 37)}<div class="tw">{@render t('Activa...', 40)}{@render toggle(true)}</div></div>
            <div class="pr">{@render t('Alineación vertical', 96)}<div class="pbox psel"><span class="bb">{@render ic('middle', 11)}</span>{@render t('Medio', 34)}{@render ic('chev', 12, 12)}</div></div>
          </div>
          <i class="psb"></i>
        </div>
      </aside>
    </div>
    <footer class="tb small">
      <div class="app">{@render ic('win', 16)}</div>
      <div class="app">{@render ic('search', 16, 16, 's2')}</div>
      <div class="app tv">{@render ic('taskview', 16, 15, 's2')}</div>
      {#each apps as a, i}
        <div class="app" class:cur={a === 'chrome'} class:run={i > 0}>{@render ic(a, 16)}</div>
      {/each}
      <div class="clock">{@render t('3:40 p. m.', 51)}</div>
    </footer>
  </section>
</div>

<style>
  :global(body) { margin: 0; overflow: hidden; }
  .desk { display: flex; width: 3840px; height: 1080px; font-family: 'Open Sans', 'Noto Sans', sans-serif; color: #323130; }
  .desk :global(*) { box-sizing: border-box; }
  .i { display: block; flex: none; fill: none; stroke: currentColor; stroke-width: var(--sw, 1.5); overflow: visible; }
  .s2 { stroke-width: 2; }
  .s3 { stroke-width: 2.7; }
  .s4 { stroke-width: 3.8; }
  .t { white-space: pre; display: inline-block; width: max-content; flex: none; }
  .tealc, .teal { color: #03787c; }
  .fade { overflow: hidden; display: block; -webkit-mask-image: linear-gradient(90deg, #000 86%, transparent 100%); mask-image: linear-gradient(90deg, #000 86%, transparent 100%); }

  .left { width: 1920px; height: 1080px; display: flex; flex-direction: column; background: #fff; flex: none; overflow: hidden; }
  .ltabs { height: 51px; background: #bbbcbe; display: flex; align-items: center; flex: none; font-size: 17.2px; color: #4b4e52; }
  .ltab { width: 371px; height: 51px; display: grid; grid-template-columns: 36px 276px 12px; align-items: center; padding-left: 30px; }
  .ltab .fade { width: 257px; }
  .ltab.act { width: 359px; padding-left: 18px; background: #e1e3e5; border-radius: 13px 13px 0 0; color: #303236; }
  .lplus { padding-left: 24px; }
  .lwin { margin-left: auto; display: flex; gap: 53.5px; padding-right: 28px; color: #66686c; height: 44px; align-items: center; }
  .lbar { height: 56px; background: #e1e3e5; border-bottom: 2px solid #adaeb0; display: grid; grid-template-columns: 48px 48px 46px 1567px 49px 45px 51px 1fr; align-items: center; padding-left: 21px; color: #202124; flex: none; }
  .dim { color: #8d9093; }
  .laddr { width: 1547px; height: 42px; border-radius: 21px; background: #c6c8ca; display: grid; grid-template-columns: 33px 1363px 48px 48px 1fr; align-items: center; padding-left: 17px; font-size: 20px; color: #5a5d61; }
  .url b { font-weight: 400; color: #202124; }
  .av { background: #01579b; color: #fff; border-radius: 50%; width: 32px; height: 32px; font-size: 17px; display: grid; place-items: center; }
  .sp { height: 72px; background: #0078d4; color: #fff; display: grid; grid-template-columns: 61px 525px 1047px 72px 70px 62px 48px; align-items: center; padding-left: 23px; flex: none; }
  .brand { font-weight: 600; font-size: 23px; }
  .lsearch { width: 702px; height: 48px; border-radius: 6px; background: #fafafa; display: flex; align-items: center; gap: 18px; padding-left: 24px; font-size: 20px; color: #605e5c; box-shadow: 0 1px 3px #0003; }
  .lsearch .i { color: #0f5fb8; }
  .me { width: 48px; height: 48px; border: 1.5px solid #fff; border-radius: 50%; display: grid; place-items: center; font-size: 20px; }
  .lbody { display: flex; height: 855px; flex: none; }
  .lrail { width: 72px; background: #f3f2f1; border-right: 1px solid #e9e8e7; padding-top: 24px; display: flex; flex-direction: column; align-items: center; gap: 48px; color: #605e5c; padding-right: 1px; }
  .lrail .i { stroke-width: 1.7; }
  .lrail hr { width: 58px; border: 0; border-top: 1px solid #dddcda; margin: -23px 0 -25px; }
  main { flex: 1; min-width: 0; display: flex; flex-direction: column; }
  .site { height: 121px; border-bottom: 2px solid #e9e9e9; display: grid; grid-template-columns: 105px 510px 92px 160px 112px 195px 64px 144px 34px 130px 34px 1fr; align-items: center; padding-left: 48px; font-size: 20px; }
  .site > .t { margin-top: 14px; }
  .site > .h { font-size: 34px; font-weight: 600; margin-top: 5px; }
  .site > .teal { margin-top: 23px; }
  .site .i { margin-top: 8px; }
  .site .low { margin-top: 22px; }
  .logo { width: 72px; height: 72px; background: #0078d4; color: #fff; display: grid; place-items: center; font-size: 26px; }
  .cmd { height: 67px; border-bottom: 1.5px solid #e9e9e9; display: grid; grid-template-columns: 173px 37px 293px 37px 129px 37px 88px 54px 36px 126px 59px 221px 37px 200px 59px 72px 74px 1fr; align-items: center; padding-left: 48px; font-size: 20px; }
  .new { width: 143px; height: 48px; border-radius: 3px; background: #03787c; color: #fff; font-weight: 700; display: flex; align-items: center; gap: 12px; padding-left: 22px; }
  .scroll { flex: 1; min-height: 0; display: grid; grid-template-columns: 1823px 25px; grid-template-rows: 644px 23px; }
  .list { overflow: hidden; padding-left: 48px; }
  .ltitle { height: 129px; padding-top: 20px; display: flex; align-items: center; gap: 18px; font-size: 25px; font-weight: 600; }
  .lr { display: grid; grid-template-columns: 450px repeat(5, 225px) 110px; padding-left: 90px; border-bottom: 1.5px solid #edebe9; height: 82px; }
  .lhead { height: 61px; align-items: center; font-weight: 600; font-size: 19.5px; border-color: #e5e4e3; padding-bottom: 2px; }
  .lh { display: flex; align-items: center; gap: 10px; }
  .lh .i { margin-top: -4px; }
  .far { gap: 14px; }
  .row { padding-top: 17px; font-size: 17.2px; color: #605e5c; }
  .tall { height: 105.5px; }
  .num { display: flex; align-items: flex-start; margin-left: -12px; font-size: 20px; color: #3b3a39; }
  .num .i { margin-top: -6px; margin-right: -3px; }
  .num span { margin-top: 1px; }
  .vsb { background: #f0f0f0; display: flex; flex-direction: column; align-items: center; padding: 10px 0; }
  .vsb .th { width: 21px; height: 42px; background: #c1c1c1; margin-top: 10px; }
  .vsb .au { border: 6px solid transparent; border-top: 0; border-bottom: 6px solid #a3a3a3; }
  .vsb .ad { border: 6px solid transparent; border-bottom: 0; border-top: 6px solid #505050; margin-top: auto; }
  .hsb { background: #f0f0f0; display: flex; align-items: center; padding: 0 8px; }
  .hsb .th { width: 290px; height: 21px; background: #c1c1c1; margin-left: 11px; align-self: flex-end; }
  .hsb .al { border: 6px solid transparent; border-left: 0; border-right: 6px solid #a3a3a3; }
  .hsb .ar { border: 6px solid transparent; border-right: 0; border-left: 6px solid #505050; margin-left: auto; }
  .corner { background: #dcdcdc; }

  .tb { background: #1c1c1c; color: #fff; display: flex; align-items: stretch; flex: none; }
  .tb.big { height: 46px; }
  .tb.small { height: 30px; }
  .st { width: 55px; display: grid; place-items: center; }
  .tsearch { width: 386px; background: #f2f2f2; border: 1.5px solid #c8c8c8; color: #222; display: flex; align-items: center; gap: 17px; padding: 0 3px 0 16px; font-size: 20px; }
  .case { margin-left: auto; width: 80px; height: 36px; border-radius: 8px; background: #e3e3e3; display: grid; place-items: center; }
  .app { width: 57px; display: grid; place-items: center; border-bottom: 3px solid transparent; padding-top: 3px; background-clip: padding-box; }
  .run { border-image: linear-gradient(90deg, transparent 12%, #76b9ed 12%, #76b9ed 88%, transparent 88%) 3; border-style: solid; border-width: 0 0 3px; }
  .cur { background: #4b4b4b; }
  .small .app { width: 37px; border-bottom-width: 2px; padding-top: 2px; }
  .small .app:not(.run):nth-child(-n + 3) { width: 36px; }
  .small .tv { margin-right: 2.5px; }
  .clock { margin-left: auto; padding-right: 8px; font-size: 11.5px; display: flex; align-items: center; }
  .tray { margin-left: auto; display: grid; grid-template-columns: 48px 56px 151px 32px 37px 39px 33px 42px 57px 112px 54px 8px; width: 669px; align-items: center; font-size: 19.5px; }
  .ts { font-size: 17px; }
  .edge { height: 44px; border-left: 1px solid #777; }

  .right { --sw: 1.7; width: 1920px; height: 1080px; display: flex; flex-direction: column; background: #fff; flex: none; overflow: hidden; font-size: 13.2px; }
  .rtabs { height: 34px; background: #bbbcbe; display: flex; align-items: center; flex: none; padding-left: 8px; font-size: 11.5px; color: #303236; }
  .rtab { width: 234.4px; height: 34px; display: grid; grid-template-columns: 24px 180px 8px; align-items: center; padding-left: 11px; }
  .rtab .fade { width: 168px; }
  .rtab:not(.act) { background: linear-gradient(#85878a, #85878a) right center / 1px 20px no-repeat; }
  .rtab.act { width: 236px; background: #e1e3e5; border-radius: 9px 9px 0 0; padding-left: 12px; }
  .rplus { padding-left: 16px; }
  .rwin { margin-left: auto; display: flex; gap: 36px; padding-right: 18px; height: 28px; align-items: center; align-self: flex-start; color: #111; }
  .rbar { height: 37px; background: #e1e3e5; border-bottom: 1px solid #a8a9ab; display: grid; grid-template-columns: 32px 32px 30px 1687px 32px 28px 36px 1fr; align-items: center; padding-left: 14px; color: #202124; flex: none; }
  .raddr { width: 1671px; height: 28px; border-radius: 14px; background: #c6c8ca; display: grid; grid-template-columns: 22px 1547px 32px 32px 1fr; align-items: center; padding-left: 13px; font-size: 13.4px; color: #5a5d61; }
  .rbar .av { width: 22px; height: 22px; font-size: 11px; }
  .pa { height: 48px; background: #742774; color: #fff; display: grid; grid-template-columns: 41px 95px 13px 1347px 32px 200.5px 48px 48px 40px 32px; align-items: center; padding-left: 15px; flex: none; }
  .pa .b { font-weight: 600; font-size: 15.5px; }
  .env { display: flex; flex-direction: column; line-height: 16px; }
  .e1 { font-size: 11.5px; line-height: 15px; }
  .e2 { font-size: 13.4px; font-weight: 600; }
  .pa .me { width: 32px; height: 32px; font-size: 13px; border-width: 1px; }
  .ptool { height: 45px; border-bottom: 1.5px solid #d2d0ce; display: grid; grid-template-columns: 26px 40px 14px 26px 10px 35px 26px 10px 22px 11px 26px 54px 24px 180px 86px 154px 26px 30px 26px 42px 29px 27px 101px 29px 27px 109px 343px 24px 53px 13px 39px 41px 40px 40px 27px 9px 35px 1fr; align-items: center; padding-left: 24px; flex: none; }
  .ptool > .i { color: #742774; }
  .ptool .g { color: #484644; stroke-width: 2.2; }
  .ptool > .off { color: #bbb; }
  .vl { height: 28px; border-left: 1px solid #c8c6c4; }
  .sh { height: 20px; border-color: #777; }
  .tbx { height: 32px; border: 1px solid #605e5c; border-radius: 2px; display: flex; align-items: center; justify-content: space-between; padding: 0 8px; }
  .tbx.a { width: 172px; }
  .tbx.b { width: 78px; padding: 0 4px; }
  .tbx.c { width: 140px; }
  .dotted { position: relative; color: #742774; justify-self: start; }
  .dotted::after { content: ''; position: absolute; width: 7px; height: 7px; border-radius: 50%; background: #e81123; top: -5px; right: -5px; }
  .formula { height: 43px; background: #f3f2f1; border-bottom: 1.5px solid #d0cfce; display: grid; grid-template-columns: 346px 24px 60px 1440px 1fr; align-items: center; padding-left: 18px; flex: none; }
  .prop { width: 333px; height: 32px; border: 1px solid #c8c6c4; background: #fff; display: flex; align-items: center; justify-content: space-between; padding: 0 4px 0 9px; font-size: 12.5px; }
  .eq { font-size: 19px; font-weight: 600; line-height: 20px; }
  .fx { height: 32px; border: 1px solid #c8c6c4; background: #f0f0f0; display: flex; align-items: center; justify-content: center; gap: 4px; padding-left: 0; }
  .fx em { font: italic 22px/20px 'Liberation Serif', serif; letter-spacing: -1px; color: #111; }
  .fin { width: 1429px; height: 32px; border: 1px solid #c8c6c4; border-left: 0; background: #fff; color: #a31515; display: flex; align-items: center; padding-left: 8px; font: 14px 'DejaVu Sans Mono', monospace; }
  .pbody { display: flex; height: 843px; flex: none; }
  .rrail { width: 49px; background: #f3f2f1; border-right: 1px solid #e1dfdd; display: flex; flex-direction: column; }
  .ri { height: 40px; display: grid; place-items: center; color: #323130; }
  .ri em { font: italic 17px 'Liberation Serif', serif; }
  .ri.on { background: #fff; border-radius: 2px; }
  .sp1 { margin-top: auto; }
  .data { width: 282px; background: #f3f2f1; }
  .dh { height: 48px; display: flex; align-items: center; justify-content: space-between; padding: 3px 18px 0 17px; font-size: 17px; font-weight: 600; }
  .ds { margin: 0 17px; width: 248px; height: 30px; border: 1px solid #605e5c; border-radius: 2px; background: #fff; display: flex; align-items: center; gap: 8px; padding-left: 12px; font-size: 12.4px; color: #605e5c; }
  .ds .i { color: #742774; }
  .da { height: 31px; border-bottom: 1px solid #c8c6c4; display: flex; align-items: center; gap: 8px; padding: 0 0 0 21px; font-size: 13px; margin-bottom: 15px; }
  .da .i:first-child { color: #a06ba0; }
  .src { height: 47px; display: grid; grid-template-columns: 34px 204px 1fr; padding-left: 18px; align-items: start; padding-top: 2px; }
  .st2 { display: flex; flex-direction: column; margin-top: -3px; }
  .s1 { font-size: 12.8px; line-height: 15px; }
  .s22 { font-size: 10.8px; line-height: 13px; }
  .src > .i:last-child { color: #a06ba0; margin-top: 5px; }
  .work { width: 1267px; display: flex; flex-direction: column; }
  .canvas { height: 805px; background: #e0e0e0; border-bottom: 1px solid #c8c8c8; padding: 121px 0 0 33px; display: flex; flex-direction: column; align-items: flex-start; box-shadow: inset 8px 0 8px -6px #0001; }
  .appx { position: relative; width: 1219px; height: 546px; background: #fff; overflow: hidden; flex: none; }
  .banner { margin-top: 3px; height: 57px; background: #000; color: #fff; font-weight: 700; font-size: 20px; display: grid; place-items: center; }
  .heads { margin: 7px 0 0 5px; height: 43px; width: 1241px; display: flex; background: #4d4d4d; color: #fff; font-weight: 700; font-size: 12.8px; line-height: 15px; }
  .hd { flex: none; border: 1px solid #8d8d8d; border-width: 1px 0 1px 1px; border-left-color: #d8d8d8; display: flex; flex-direction: column; align-items: center; justify-content: center; }
  .hd.start { align-items: flex-start; padding-left: 2px; }
  .gallery { height: 384px; margin: 5px 0 0; border-top: 1.5px solid #e4e4e4; overflow: hidden; padding: 7px 0 0 7px; }
  .card { width: 1230px; height: 53.4px; margin-bottom: 11.4px; border: 1px solid #eee; border-radius: 2px; box-shadow: 0 4px 7px #0003; background: #fff; display: grid; grid-template-columns: 76px 76px 77px 104px 165px 76px 77px 76px 79px 194px 107px 18px 120px; font-size: 10.2px; line-height: 12px; color: #111; }
  .card.first { border: 1px dotted #c9a7c9; }
  .card > div { display: flex; flex-direction: column; align-items: center; justify-content: center; }
  .card .date { flex-direction: row; align-self: end; height: 40px; border: 1px solid #999; border-bottom-color: #ccc; justify-content: space-between; font-size: 13.6px; line-height: 18px; }
  .dv { padding-left: 6px; overflow: hidden; width: 81px; }
  .date i { width: 25px; height: 40px; background: #a3a3a3; color: #fff; display: grid; place-items: center; }
  .card .inp { height: 40px; border: 1.5px solid #999; border-radius: 3px; align-self: start; }
  .slider { height: 38px; display: flex; align-items: center; padding: 5px 0 0 5px; }
  .knob { width: 20px; height: 20px; border: 1.6px solid #1b2a7a; border-radius: 50%; background: #fff; }
  .track { flex: 1; border-top: 1.5px solid #7d7d7d; }
  .selbox { position: absolute; left: 738px; top: 123.500px; width: 77px; height: 54px; border: 1.4px solid #8a4a8c; }
  .selbox i { position: absolute; width: 10px; height: 10px; border: 1.3px solid #8a4a8c; border-radius: 50%; background: #fff; translate: -50% -50%; }
  .h0, .h1, .h2 { top: 0; }
  .h3, .h4 { top: 50%; }
  .h5, .h6, .h7 { top: 100%; }
  .selbox .h0, .selbox .h3, .selbox .h5 { left: 0; }
  .selbox .h1, .selbox .h6 { left: 50%; }
  .selbox .h2, .selbox .h4, .selbox .h7 { left: 100%; }
  .w1, .w2, .w3, .w4 { position: absolute; display: flex; align-items: center; gap: 4px; color: #666; }
  .w1 { left: 996px; top: 120px; }
  .w2 { left: 1102px; top: 117px; }
  .w3 { left: 1121px; top: 106px; }
  .w4 { left: 1120px; top: 121px; }
  .csb { width: 1137px; height: 6px; border-radius: 3px; background: #a6a6a6; margin: auto 0 1.5px -32px; }
  .crumbs { height: 38px; background: #f0f0f0; display: flex; align-items: center; font-size: 11.7px; color: #111; }
  .cr { height: 38px; display: flex; align-items: center; gap: 5px; }
  .cr .i { color: #333; }
  .c1 { width: 86px; padding-left: 13px; background: #f6f6f6; }
  .c2 { width: 82px; padding-left: 8px; background: #f6f6f6; }
  .c3 { width: 97px; padding-left: 8px; background: #f6f6f6; }
  .c4 { padding-left: 10px; }
  .sep { flex: none; }
  .zoomer { margin-left: auto; display: grid; grid-template-columns: 29px 173px 31px 16px 47px 23px; align-items: center; }
  .zs { width: 102px; height: 12px; display: grid; place-items: center; background: linear-gradient(#666, #666) center / 100% 1px no-repeat; }
  .zs i { width: 3px; height: 11px; background: #333; }
  .props { width: 322px; background: #f3f3f3; border-left: 2px solid #c8c8c8; font-size: 11.8px; color: #4a4a4a; display: flex; flex-direction: column; }
  .ph { height: 99px; border-bottom: 1px solid #c8c8c8; padding-left: 9px; flex: none; }
  .ph1 { display: flex; align-items: center; padding: 13px 19px 0 3px; height: 35px; }
  .ph1 .i { margin-left: auto; margin-top: 8px; }
  .q { width: 15px; height: 15px; border: 1px solid #605e5c; border-radius: 50%; font-size: 10px; line-height: 13px; text-align: center; margin-left: 8px; }
  .ph2 { height: 29px; display: flex; align-items: center; padding-left: 2px; font-size: 13.4px; }
  .ptabs { display: flex; gap: 26px; height: 34px; }
  .ptabs span { display: flex; align-items: center; padding-top: 3px; }
  .ptabs > .on { border-bottom: 2px solid #742774; font-weight: 700; color: #323130; }
  .pscroll { position: relative; flex: 1; min-height: 0; overflow: hidden; }
  .group { width: 308px; border-bottom: 1px solid #c8c8c8; padding: 12px 10px 0 12px; }
  .g1 { height: 337px; }
  .g2 { height: 229px; padding-top: 14px; }
  .g3 { height: 177px; padding-top: 12px; }
  .pr { height: 32px; display: flex; justify-content: space-between; align-items: flex-start; }
  .pr > .t { line-height: 27px; }
  .p46 { height: 46px; }
  .p42 { height: 42px; }
  .g2 > .pr:first-child { height: 30px; }
  .pbox { height: 24px; border: 1px solid #bdbdbd; background: #fff; padding-left: 4px; display: flex; align-items: center; color: #333; margin-right: 2px; line-height: 20px; }
  .wd { width: 140px; }
  .sm { width: 68px; }
  .psel { width: 142px; height: 26px; margin-right: 0; padding-right: 4px; }
  .psel > .i { margin-left: auto; color: #222; stroke-width: 2.3; }
  .bb { width: 17px; font-size: 13px; padding-left: 1px; color: #111; }
  .seg3, .seg4 { display: flex; gap: 4px; margin-right: 2px; width: 140px; }
  .seg3 b, .seg4 b, .sw b { border: 1px solid #bdbdbd; background: #fff; font-weight: 400; display: grid; place-items: center; color: #333; }
  .seg3 b { width: 44px; height: 26px; }
  .seg3 s { font-size: 7px; }
  .seg4 { gap: 6px; }
  .seg4 b { width: 30px; height: 24px; }
  .seg4 .on { background: #c8c8c8; border-color: #a6a6a6; }
  .tw { display: flex; gap: 12px; margin: -2px 2px 0 0; align-items: center; }
  .tg { width: 40px; height: 20px; border: 1px solid #333; border-radius: 10px; background: #fff; display: flex; align-items: center; padding: 0 3px; }
  .tg i { width: 12px; height: 12px; border-radius: 50%; background: #605e5c; }
  .tg.on { background: #742774; border-color: #742774; justify-content: flex-end; }
  .tg.on i { background: #fff; }
  .pairs { display: flex; gap: 4px; margin-right: 2px; }
  .pc { display: flex; flex-direction: column; align-items: center; width: 68px; }
  .pc .pbox { margin: 0; }
  .cap { font-size: 9.8px; line-height: 13px; margin-top: 3px; }
  .sw { display: flex; gap: 2px; }
  .sw b { width: 46px; height: 26px; }
  .sw u { width: 36px; height: 16px; background: #00126b; }
  .sw .ca { font-size: 14px; line-height: 15px; align-content: center; }
  .ca i { width: 24px; height: 3px; background: #000; }
  .sw .ln { display: flex; align-items: center; justify-content: space-between; padding: 0 4px; }
  .ln i { width: 18px; border-top: 1px solid #222; }
  .ln .i { stroke-width: 2.3; }
  .n1 { width: 44px; }
  .n2 { width: 68px; }
  .psb { position: absolute; right: 3px; top: 3px; width: 6px; height: 621px; border-radius: 3px; background: #a6a6a6; }
</style>
